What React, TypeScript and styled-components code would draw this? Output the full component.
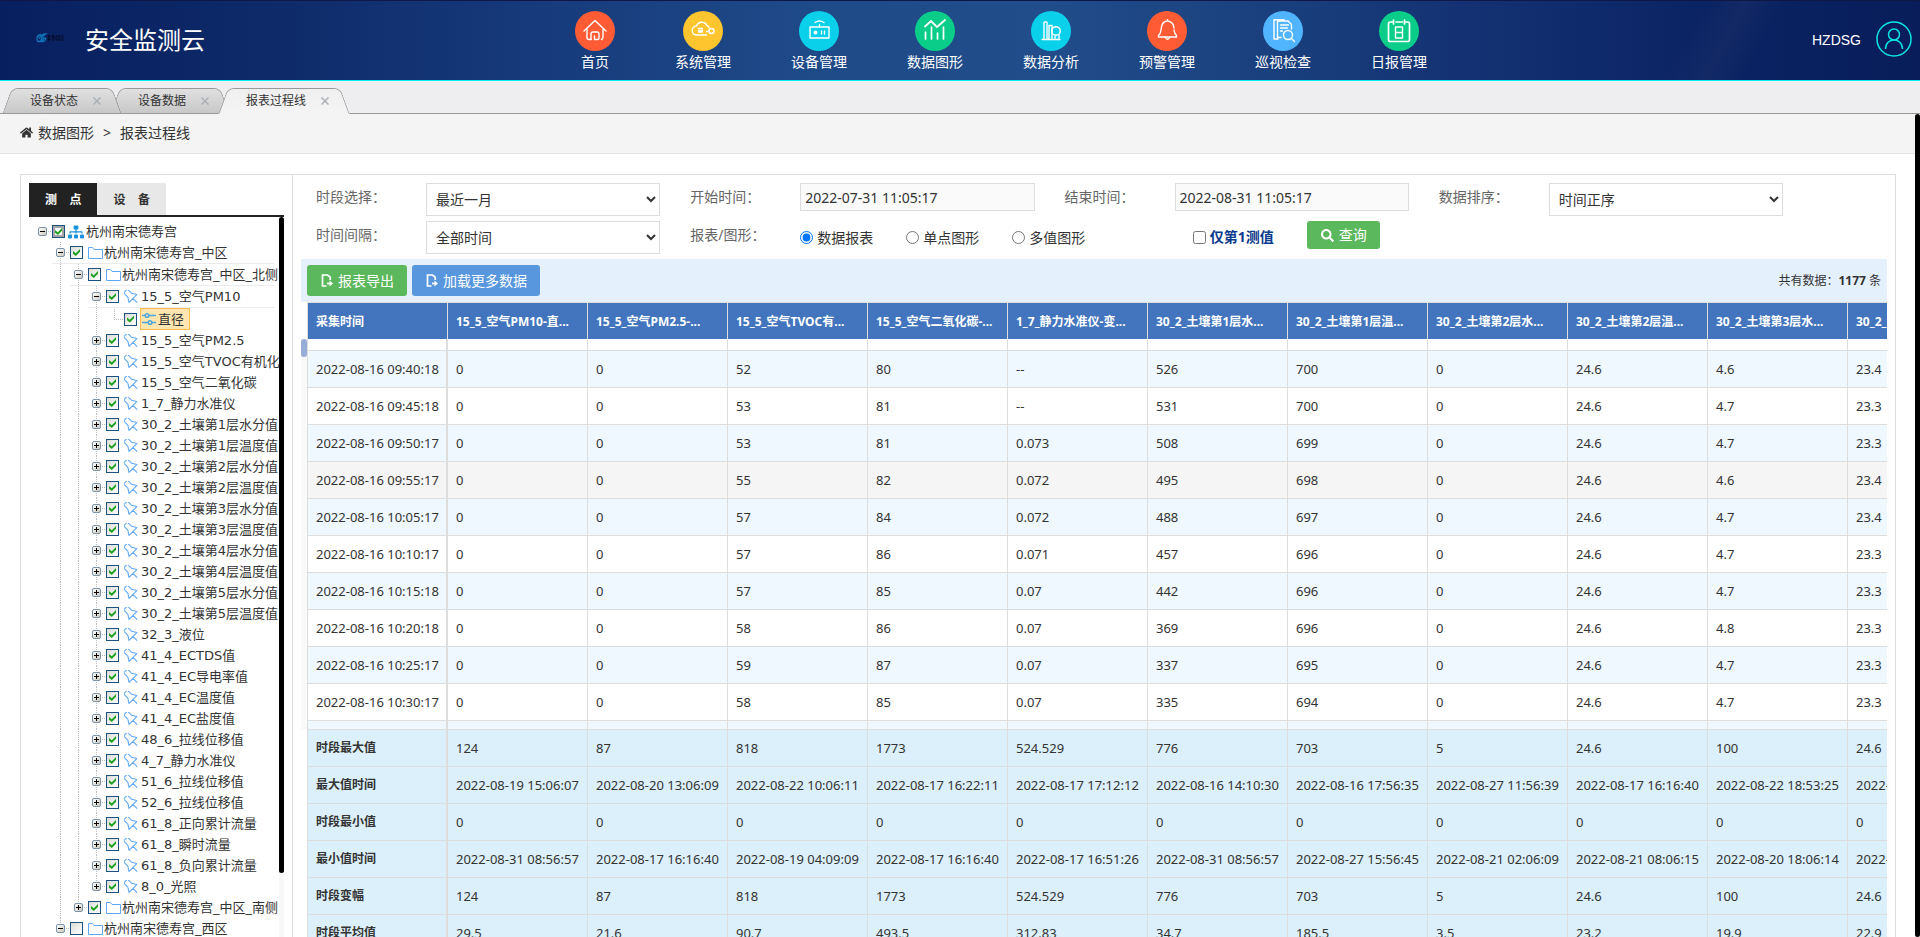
import React from "react";
import styled, { createGlobalStyle, css } from "styled-components";
import { FaSitemap, FaHome, FaSearch } from "react-icons/fa";

const uiFont = `"Noto Sans", "Noto Sans CJK SC", sans-serif`;
const lineColor = "#dddddd";

const GlobalStyle = createGlobalStyle`
  * { box-sizing: border-box; }
  body { margin: 0; overflow: hidden; background: #fff; color: #333; font: 14px/20px ${uiFont}; }
  button, input, select { font: inherit; color: inherit; }
  button { cursor: pointer; }
`;

const Page = styled.div`
  height: 100vh;
  display: flex;
  flex-direction: column;
  overflow: hidden;
`;

/* ---------- header ---------- */

const Header = styled.header`
  display: flex;
  flex: none;
  height: 81px;
  border-top: 1px solid #0e1746;
  border-bottom: 1px solid #00f0f0;
  background:
    linear-gradient(118deg, transparent 87%, rgba(60, 70, 120, 0.18) 89%, transparent 91%),
    linear-gradient(90deg, #081f5f 0%, #0e2a68 14%, #16397a 27%, #1f4a88 42%, #214d8b 54%, #1b437f 64%, #143273 76%, #0b2464 88%, #081d5a 100%);
  color: #fff;
`;

const Brand = styled.div`
  display: flex;
  align-items: center;
  flex: 0 1 545px;
  padding: 0 0 2px 36px;
  gap: 21px;
`;

const Logo = styled.div`
  display: flex;
  align-items: center;
  width: 28px;
  padding-bottom: 4px;
  svg { display: block; }
`;

const Title = styled.h1`
  margin: 0;
  font-size: 24px;
  font-weight: 400;
  line-height: 32px;
  white-space: nowrap;
`;

const Nav = styled.nav`
  display: flex;
  flex: 1;
`;

const NavLink = styled.a`
  display: flex;
  flex-direction: column;
  align-items: center;
  gap: 1px;
  padding: 10px 30px 0;
  color: #fff;
  text-decoration: none;
  white-space: nowrap;
`;

const NavIcon = styled.span<{ $color: string }>`
  display: flex;
  align-items: center;
  justify-content: center;
  width: 40px;
  height: 40px;
  border-radius: 50%;
  background: ${(p) => p.$color};
`;

const UserBox = styled.div`
  display: flex;
  align-items: center;
  gap: 15px;
  padding: 0 8px 4px 0;
  font-family: "Liberation Sans", sans-serif;
  span { padding-top: 2px; }
`;

/* ---------- page tabs ---------- */

const TabBar = styled.div`
  display: flex;
  flex: none;
  align-items: flex-end;
  height: 33px;
  padding-left: 7px;
  border-bottom: 1px solid #999;
  background: #eeeef0;
`;

const PageTab = styled.div<{ $active?: boolean; $order: number }>`
  position: relative;
  z-index: ${(p) => p.$order};
  display: flex;
  align-items: center;
  gap: 13px;
  height: 26px;
  margin: 0 -2px -1px 0;
  padding: 0 14px 0 23px;
  font-size: 12px;
  line-height: 24px;
  &::before, &::after {
    content: "";
    position: absolute;
    z-index: -1;
    top: 0;
    bottom: 0;
    border: 1px solid #999;
    background: linear-gradient(#e0e0e0, #c8c8c8);
    ${(p) => p.$active && css`background: linear-gradient(#efefef, #f4f4f4); border-bottom-color: #f4f4f4;`}
  }
  &::before {
    left: 0;
    right: 30px;
    border-right: 0;
    border-top-left-radius: 6px;
    transform: skewX(-20deg);
  }
  &::after {
    left: 30px;
    right: 0;
    border-left: 0;
    border-top-right-radius: 6px;
    transform: skewX(20deg);
  }
`;

const CloseButton = styled.button`
  display: flex;
  padding: 2px;
  border: 0;
  background: none;
  color: #aab0b6;
`;

const Crumbs = styled.div`
  display: flex;
  flex: none;
  align-items: center;
  gap: 9px;
  height: 40px;
  padding: 0 20px 2px;
  border-bottom: 1px solid #e4e4e4;
  background: #f4f4f4;
  span { display: flex; align-items: center; gap: 5px; }
`;

/* ---------- body ---------- */

const Main = styled.div`
  display: flex;
  flex: 1;
  min-height: 0;
`;

const PageColumn = styled.div`
  display: flex;
  flex: 1;
  flex-direction: column;
  min-width: 0;
`;

const Workspace = styled.main`
  display: flex;
  flex: 1;
  min-height: 0;
  margin: 20px 19px 0 20px;
  border: 1px solid ${lineColor};
  border-bottom: 0;
`;

const Rail = styled.div`
  flex: none;
  width: 5px;
  background: #f8f8f8;
`;

const RailThumb = styled.div<{ $size: string }>`
  height: ${(p) => p.$size};
  border-radius: 3px;
  background: #000;
`;

const Side = styled.aside`
  display: flex;
  flex: 0 0 272px;
  flex-direction: column;
  min-width: 0;
  min-height: 0;
  padding: 8px 8px 0;
  border-right: 1px solid ${lineColor};
`;

const SideTabs = styled.div`
  display: flex;
  flex: none;
  border-bottom: 2px solid #222;
`;

const SideTab = styled.button<{ $active?: boolean }>`
  height: 32px;
  padding: 2px 16px 0;
  border: 0;
  background: ${(p) => (p.$active ? "#222" : "#e8e8e8")};
  color: ${(p) => (p.$active ? "#fff" : "#333")};
  font-size: 12px;
  font-weight: 700;
  white-space: pre;
`;

const TreeBox = styled.div`
  display: flex;
  flex: 1;
  min-height: 0;
`;

const Tree = styled.ul`
  flex: 1;
  min-width: 0;
  margin: 0;
  padding: 4px 0 0 5px;
  overflow: hidden;
  list-style: none;
  font: 13px/21px "DejaVu Sans", "Noto Sans CJK SC", sans-serif;
  white-space: nowrap;
`;

const TreeRow = styled.li`
  display: flex;
`;

const dots = "#bdbdbd 0 1px, transparent 1px 2px";

const Guide = styled.span<{ $line?: boolean }>`
  flex: none;
  width: 18px;
  ${(p) => p.$line && css`background: repeating-linear-gradient(${dots}) 8px 0 / 1px 100% no-repeat;`}
`;

const Joint = styled.span<{ $root?: boolean; $end?: boolean }>`
  display: flex;
  flex: none;
  align-items: center;
  width: 18px;
  height: 21px;
  padding-left: 4px;
  background:
    repeating-linear-gradient(90deg, ${dots}) 8px 10px / 10px 1px no-repeat
    ${(p) => !p.$root && css`, repeating-linear-gradient(${dots}) 8px 0 / 1px ${p.$end ? "10px" : "100%"} no-repeat`};
`;

const NodeBody = styled.div<{ $tall?: boolean; $ruled?: boolean }>`
  display: flex;
  align-items: center;
  flex: 1;
  min-width: 0;
  height: ${(p) => (p.$tall || p.$ruled ? 22 : 21)}px;
  margin-right: 5px;
  border-bottom: ${(p) => (p.$ruled ? "1px solid #ebebeb" : "0")};
`;

const Expander = styled.button<{ $open?: boolean }>`
  position: relative;
  width: 9px;
  height: 9px;
  padding: 0;
  border: 1px solid #7b93a8;
  border-radius: 2px;
  background: linear-gradient(135deg, #fff, #cfc8bb);
  &::before, &::after {
    content: "";
    position: absolute;
    background: #000;
  }
  &::before { left: 1px; top: 3px; width: 5px; height: 1px; }
  &::after { left: 3px; top: 1px; width: 1px; height: ${(p) => (p.$open ? 0 : 5)}px; }
`;

const NodeLabel = styled.label`
  display: flex;
  align-items: center;
`;

const TreeCheck = styled.input<{ $partial?: boolean }>`
  appearance: none;
  flex: none;
  width: 13px;
  height: 13px;
  margin: 0 3px 0 0;
  border: 1px solid #1c5180;
  background: ${(p) => (p.$partial ? "#fff" : "linear-gradient(135deg, #dcdcd7, #fff)")};
  ${(p) => p.$partial && css`box-shadow: inset 0 0 0 2px #a5a5a5;`}
  &:checked::before {
    content: "";
    display: block;
    width: 7px;
    height: 7px;
    margin: 2px;
    background: #21a121;
    clip-path: polygon(0 28%, 40% 62%, 100% 0, 100% 38%, 40% 100%, 0 68%);
  }
`;

const NodeName = styled.span<{ $selected?: boolean; $kind: NodeKind }>`
  display: flex;
  align-items: center;
  gap: ${(p) => (p.$kind === "folder" ? 1 : 2)}px;
  padding-left: ${(p) => (p.$kind === "root" ? 0 : 2)}px;
  svg { flex: none; }
  ${(p) => p.$selected && css`
    height: 22px;
    padding: 0 5px 0 1px;
    border: 1px solid #ffb951;
    background: #ffe6b0;
  `}
`;

/* ---------- query form ---------- */

const Content = styled.section`
  flex: 1;
  min-width: 0;
  padding: 8px 8px 0;
`;

const QueryForm = styled.form`
  display: grid;
  grid-template-columns: repeat(4, minmax(0, 1fr));
  gap: 5px 30px;
  margin: 0 104px 5px 15px;
`;

const Field = styled.div`
  display: flex;
  align-items: flex-start;
  height: 33px;
`;

const FieldLabel = styled.label`
  flex: 0 0 110px;
  color: #666;
  line-height: 28px;
  white-space: nowrap;
`;

const Select = styled.select`
  flex: 1;
  min-width: 0;
  height: 33px;
  padding: 0 5px;
  border: 1px solid ${lineColor};
  border-radius: 0;
  background: #fff;
`;

const TextInput = styled.input`
  flex: 1;
  min-width: 0;
  height: 28px;
  padding: 0 4px;
  border: 1px solid ${lineColor};
  background: #fafafa;
`;

const Choices = styled.div`
  display: flex;
  gap: 33px;
  height: 33px;
  white-space: nowrap;
`;

const Choice = styled.label`
  display: flex;
  align-items: center;
  gap: 4px;
  input { width: 13px; height: 13px; margin: 0; }
`;

const QueryActions = styled.div`
  display: flex;
  align-items: flex-start;
  justify-content: flex-end;
  gap: 33px;
  padding-right: 29px;
`;

const FirstOnly = styled(Choice)`
  height: 32px;
  color: #0a3a8c;
  font-weight: 700;
  white-space: nowrap;
`;

const ActionButton = styled.button<{ $color: string; $small?: boolean }>`
  display: flex;
  align-items: center;
  gap: 5px;
  height: ${(p) => (p.$small ? 28 : 31)}px;
  padding: 0 13px 0 14px;
  border: 0;
  border-radius: 3px;
  background: ${(p) => p.$color};
  color: #fff;
  white-space: nowrap;
`;

/* ---------- data table ---------- */

const Toolbar = styled.div`
  display: flex;
  align-items: center;
  gap: 5px;
  height: 43px;
  padding: 0 6px;
  background: #e4f0fc;
`;

const Total = styled.div`
  margin-left: auto;
  font-size: 12px;
`;

const TableArea = styled.div`
  display: flex;
`;

const ScrollTrack = styled.div`
  flex: none;
  width: 6px;
  height: 390px;
  margin-top: 37px;
  background: #f9f9f9;
`;

const ScrollThumb = styled.div`
  height: 18px;
  border-radius: 3px;
  background: #96aed7;
`;

const TableClip = styled.div`
  flex: 1;
  min-width: 0;
  overflow: hidden;
  border-left: 1px solid ${lineColor};
`;

const Table = styled.table`
  width: 1680px;
  table-layout: fixed;
  border-collapse: separate;
  border-spacing: 0;
  font-size: 13px;
  line-height: 20px;
  text-align: left;
  white-space: nowrap;
`;

const HeadCell = styled.th`
  height: 37px;
  padding: 1px 8px 0;
  overflow: hidden;
  border-top: 1px solid ${lineColor};
  border-right: 1px solid ${lineColor};
  background: #4275bd;
  color: #fff;
  font-size: 12px;
`;

const cell = css`
  height: 37px;
  padding: 0 8px;
  overflow: hidden;
  border-right: 1px solid ${lineColor};
  border-bottom: 1px solid ${lineColor};
  &:first-child { border-right-width: 2px; }
`;

const Cell = styled.td`
  ${cell}
`;

const RowName = styled.th`
  ${cell}
  font-size: 12px;
`;

const DataRow = styled.tr<{ $tone: "plain" | "stripe" | "hover" }>`
  background: ${(p) => ({ plain: "#fff", stripe: "#eff8ff", hover: "#f5f5f5" })[p.$tone]};
`;

const EdgeRow = styled.tr<{ $stripe?: boolean }>`
  background: ${(p) => (p.$stripe ? "#eff8ff" : "#fff")};
  td { height: ${(p) => (p.$stripe ? 9 : 12)}px; padding: 0; }
`;

const SummaryRow = styled.tr`
  background: #dcf0fb;
`;

/* ---------- icons ---------- */

const NavSvg = ({ children }: { children: React.ReactNode }) => (
  <svg width="24" height="24" viewBox="0 0 24 24" fill="none" stroke="#fff" strokeWidth="1.4" strokeLinecap="round" strokeLinejoin="round">
    {children}
  </svg>
);

const navItems = [
  { label: "首页", color: "#ff5c35", icon: <><path d="M1 12 12 1.500 23 12M4 10v8.500q0 2 2 2h2M20 10v8q0 2-1.500 2.500" /><path d="M8 20.500V15q0-2 2-2h4q2 0 2 2v4q0 1.500-1.500 1.500h-3V17" /></> },
  { label: "系统管理", color: "#ffc52f", icon: <><path d="M15.500 16H6a4.500 4.500 0 0 1-.5-9C7 2 14 2 16 6.500q1.500.5 2 2" /><circle cx="20.500" cy="12" r="2.500" /><path d="M7.500 9.500h4M7.500 11.500h4M7.500 13h4M15.500 12.500H18" /></> },
  { label: "设备管理", color: "#0ad0ea", icon: <><path d="M3 8h19v11H3zM12.500 8V5.500M8 3.500q4.500-3 9 0" /><circle cx="8.500" cy="13.500" r="1.300" fill="#fff" /><path d="M14.500 12v3M17.500 12v3" /></> },
  { label: "数据图形", color: "#09cd88", icon: <><path d="m2 7.500 6-5.500 6 6 8-7" strokeWidth="1.800" /><path d="M2.500 20v-7M8.500 20V8M14.500 20v-6M20.500 20V8" strokeWidth="1.700" /></> },
  { label: "数据分析", color: "#0ad0ea", icon: <><path d="M3 20.500h18M5 20.500v-17q1.500-1.500 3 0v17M10 20.500v-14h3v14" /><circle cx="17" cy="12" r="4.300" /><path d="M16 20.500v-3M20 20.500v-4" /></> },
  { label: "预警管理", color: "#ff5c35", icon: <><path d="M12.500 2C7 2.500 6.500 7 6 11q-.5 4-2.500 5.500V18h18v-1.500Q19.500 15 19 11M12.500 2V.8M13 2q5.500 1 6 7" /><path d="M10 18q2.500 4.500 5 0" /></> },
  { label: "巡视检查", color: "#50b4ff", icon: <><path d="M6.500 2H17l3.500 3.500V10M6.500 2v16.500H10M3 1v19h4M3 .8h10" /><path d="M9.500 6h8M9.500 9h7M9.500 12h2" /><circle cx="17" cy="16" r="4.500" /><path d="m20.500 19.500 3 3" /></> },
  { label: "日报管理", color: "#09cd88", icon: <><path d="M5 3H3.500Q1.500 3 1.500 5v15.500q0 2 2 2h17q2 0 2-2V5q0-2-2-2H19M9 3h6.500M6.500 1v4M17.500 1v4" strokeWidth="1.700" /><path d="M8.500 8h7v11h-7zM8.500 13.500h7" /></> },
];

type NodeKind = "root" | "folder" | "pin" | "measure";

const TreeIcon = ({ kind }: { kind: NodeKind }) => {
  if (kind === "root") return <FaSitemap size={16} color="#1d91dc" />;
  if (kind === "folder")
    return (
      <svg width="15" height="14" viewBox="0 0 15 14" fill="none" stroke="#5fa8f7" strokeWidth="1">
        <path d="M.5 1.500h4l1.500 2h8.500v9H.5z" />
      </svg>
    );
  if (kind === "measure")
    return (
      <svg width="14" height="14" viewBox="0 0 14 14" fill="none" stroke="#4aa8dd" strokeWidth="1.500">
        <path d="M0 3.500h3M7 3.500h7M0 10.500h6M10 10.500h4" />
        <circle cx="5" cy="3.500" r="1.800" />
        <circle cx="8" cy="10.500" r="1.800" />
      </svg>
    );
  return (
    <svg width="15" height="14" viewBox="0 0 14 14" fill="none" stroke="#5fa8f7" strokeWidth="1.100" strokeLinejoin="round">
      <path d="M4.300-1.500h5.400v6l2.800 4.500h-11l2.800-4.500zM7 9v6" transform="rotate(-45 7 7)" />
    </svg>
  );
};

const ExportIcon = () => (
  <svg width="12" height="13" viewBox="0 0 12 13" fill="none" stroke="#fff" strokeWidth="1.700">
    <path d="M9.200 6V3.200L6.500 1H1.500v11h4" />
    <path d="M6 9.500h3" />
    <path d="M8.500 6.500 12 9.500l-3.500 3z" fill="#fff" stroke="none" />
  </svg>
);

const CloseIcon = () => (
  <svg width="8" height="8" viewBox="0 0 8 8" stroke="currentColor" strokeWidth="1.500">
    <path d="m.5.5 7 7M7.500.5l-7 7" />
  </svg>
);

/* ---------- data ---------- */

type TreeNode = {
  name: string;
  level: number;
  kind: NodeKind;
  open?: boolean;
  unchecked?: boolean;
  ruled?: boolean;
  end?: boolean;
};

const sensorNames = [
  "15_5_空气PM2.5", "15_5_空气TVOC有机化", "15_5_空气二氧化碳", "1_7_静力水准仪",
  "30_2_土壤第1层水分值", "30_2_土壤第1层温度值", "30_2_土壤第2层水分值", "30_2_土壤第2层温度值",
  "30_2_土壤第3层水分值", "30_2_土壤第3层温度值", "30_2_土壤第4层水分值", "30_2_土壤第4层温度值",
  "30_2_土壤第5层水分值", "30_2_土壤第5层温度值", "32_3_液位", "41_4_ECTDS值", "41_4_EC导电率值",
  "41_4_EC温度值", "41_4_EC盐度值", "48_6_拉线位移值", "4_7_静力水准仪", "51_6_拉线位移值",
  "52_6_拉线位移值", "61_8_正向累计流量", "61_8_瞬时流量", "61_8_负向累计流量", "8_0_光照",
];

const nodes: TreeNode[] = [
  { name: "杭州南宋德寿宫", level: 0, kind: "root", open: true },
  { name: "杭州南宋德寿宫_中区", level: 1, kind: "folder", open: true, ruled: true },
  { name: "杭州南宋德寿宫_中区_北侧", level: 2, kind: "folder", open: true, ruled: true },
  { name: "15_5_空气PM10", level: 3, kind: "pin", open: true, ruled: true },
  { name: "直径", level: 4, kind: "measure", end: true },
  ...sensorNames.map((name, i): TreeNode => ({ name, level: 3, kind: "pin", end: i === sensorNames.length - 1 })),
  { name: "杭州南宋德寿宫_中区_南侧", level: 2, kind: "folder", end: true },
  { name: "杭州南宋德寿宫_西区", level: 1, kind: "folder", open: true, unchecked: true, end: true },
];

const columns = [
  "采集时间", "15_5_空气PM10-直...", "15_5_空气PM2.5-...", "15_5_空气TVOC有...", "15_5_空气二氧化碳-...",
  "1_7_静力水准仪-变...", "30_2_土壤第1层水...", "30_2_土壤第1层温...", "30_2_土壤第2层水...",
  "30_2_土壤第2层温...", "30_2_土壤第3层水...", "30_2_",
];

const records = [
  ["2022-08-16 09:40:18", "0", "0", "52", "80", "--", "526", "700", "0", "24.6", "4.6", "23.4"],
  ["2022-08-16 09:45:18", "0", "0", "53", "81", "--", "531", "700", "0", "24.6", "4.7", "23.3"],
  ["2022-08-16 09:50:17", "0", "0", "53", "81", "0.073", "508", "699", "0", "24.6", "4.7", "23.3"],
  ["2022-08-16 09:55:17", "0", "0", "55", "82", "0.072", "495", "698", "0", "24.6", "4.6", "23.4"],
  ["2022-08-16 10:05:17", "0", "0", "57", "84", "0.072", "488", "697", "0", "24.6", "4.7", "23.4"],
  ["2022-08-16 10:10:17", "0", "0", "57", "86", "0.071", "457", "696", "0", "24.6", "4.7", "23.3"],
  ["2022-08-16 10:15:18", "0", "0", "57", "85", "0.07", "442", "696", "0", "24.6", "4.7", "23.3"],
  ["2022-08-16 10:20:18", "0", "0", "58", "86", "0.07", "369", "696", "0", "24.6", "4.8", "23.3"],
  ["2022-08-16 10:25:17", "0", "0", "59", "87", "0.07", "337", "695", "0", "24.6", "4.7", "23.3"],
  ["2022-08-16 10:30:17", "0", "0", "58", "85", "0.07", "335", "694", "0", "24.6", "4.7", "23.3"],
];
const hoveredRecord = 3;

const summary = [
  ["时段最大值", "124", "87", "818", "1773", "524.529", "776", "703", "5", "24.6", "100", "24.6"],
  ["最大值时间", "2022-08-19 15:06:07", "2022-08-20 13:06:09", "2022-08-22 10:06:11", "2022-08-17 16:22:11", "2022-08-17 17:12:12", "2022-08-16 14:10:30", "2022-08-16 17:56:35", "2022-08-27 11:56:39", "2022-08-17 16:16:40", "2022-08-22 18:53:25", "2022-"],
  ["时段最小值", "0", "0", "0", "0", "0", "0", "0", "0", "0", "0", "0"],
  ["最小值时间", "2022-08-31 08:56:57", "2022-08-17 16:16:40", "2022-08-19 04:09:09", "2022-08-17 16:16:40", "2022-08-17 16:51:26", "2022-08-31 08:56:57", "2022-08-27 15:56:45", "2022-08-21 02:06:09", "2022-08-21 08:06:15", "2022-08-20 18:06:14", "2022-"],
  ["时段变幅", "124", "87", "818", "1773", "524.529", "776", "703", "5", "24.6", "100", "24.6"],
  ["时段平均值", "29.5", "21.6", "90.7", "493.5", "312.83", "34.7", "185.5", "3.5", "23.2", "19.9", "22.9"],
];

const tabs = ["设备状态", "设备数据", "报表过程线"];

/* ---------- view ---------- */

const TreeItem = ({ node }: { node: TreeNode }) => {
  const leaf = node.kind === "measure";
  return (
    <TreeRow>
      {Array.from({ length: node.level }, (_, i) => <Guide key={i} $line={i > 0} />)}
      <NodeBody $ruled={node.ruled} $tall={leaf}>
        <Joint $root={node.level === 0} $end={node.end}>
          {!leaf && <Expander type="button" $open={node.open} aria-label={node.open ? "收起" : "展开"} />}
        </Joint>
        <NodeLabel>
          <TreeCheck type="checkbox" defaultChecked={!node.unchecked} $partial={node.level === 0} />
          <NodeName $kind={node.kind} $selected={leaf}>
            <TreeIcon kind={node.kind} />
            {node.name}
          </NodeName>
        </NodeLabel>
      </NodeBody>
    </TreeRow>
  );
};

export default function App() {
  return (
    <Page>
      <GlobalStyle />
      <Header>
        <Brand>
          <Logo>
            <svg width="28" height="10" viewBox="0 0 28 10" fill="none">
              <path d="M5 1.500Q1 2 1 6q0 3 3 2.500 3-.5 4-4M3 5.500Q6 1 9.500 1 5 4 5 8q3 1.500 4.500-1.500.5-2-2-1.500" stroke="#0e76b8" strokeWidth="1.400" />
              <path d="M11.500 3.500h3M11.500 6.500h3M13 2v6M15.500 3h3M15.500 5h3M17 2.500V8M20 3h3v4h-3zM24.500 3h3M24.500 5h3M24.500 7h3" stroke="#060b22" strokeWidth="1" />
            </svg>
          </Logo>
          <Title>安全监测云</Title>
        </Brand>
        <Nav>
          {navItems.map((item) => (
            <NavLink href="#" key={item.label}>
              <NavIcon $color={item.color}><NavSvg>{item.icon}</NavSvg></NavIcon>
              {item.label}
            </NavLink>
          ))}
        </Nav>
        <UserBox>
          <span>HZDSG</span>
          <svg width="36" height="36" viewBox="0 0 36 36" fill="none" stroke="#0be3e3" strokeWidth="1.500">
            <circle cx="18" cy="18" r="17" />
            <circle cx="18" cy="13.500" r="5.500" />
            <path d="M9.500 28c0-12 17-12 17 0" />
          </svg>
        </UserBox>
      </Header>

      <TabBar>
        {tabs.map((name, i) => (
          <PageTab key={name} $active={i === 2} $order={i === 2 ? 5 : 3 - i}>
            {name}
            <CloseButton aria-label="关闭"><CloseIcon /></CloseButton>
          </PageTab>
        ))}
      </TabBar>

      <Main>
        <PageColumn>
          <Crumbs>
            <span><FaHome size={13} />数据图形</span>
            <span>&gt;</span>
            <span>报表过程线</span>
          </Crumbs>
          <Workspace>
            <Side>
              <SideTabs>
                <SideTab $active>{"测\u00a0\u00a0\u00a0\u00a0点"}</SideTab>
                <SideTab>{"设\u00a0\u00a0\u00a0\u00a0备"}</SideTab>
              </SideTabs>
              <TreeBox>
                <Tree>
                  {nodes.map((node) => <TreeItem key={node.name} node={node} />)}
                </Tree>
                <Rail><RailThumb $size="656px" /></Rail>
              </TreeBox>
            </Side>

            <Content>
              <QueryForm onSubmit={(e) => e.preventDefault()}>
                <Field>
                  <FieldLabel htmlFor="period">时段选择：</FieldLabel>
                  <Select id="period"><option>最近一月</option></Select>
                </Field>
                <Field>
                  <FieldLabel htmlFor="start">开始时间：</FieldLabel>
                  <TextInput id="start" defaultValue="2022-07-31 11:05:17" />
                </Field>
                <Field>
                  <FieldLabel htmlFor="end">结束时间：</FieldLabel>
                  <TextInput id="end" defaultValue="2022-08-31 11:05:17" />
                </Field>
                <Field>
                  <FieldLabel htmlFor="order">数据排序：</FieldLabel>
                  <Select id="order"><option>时间正序</option></Select>
                </Field>
                <Field>
                  <FieldLabel htmlFor="interval">时间间隔：</FieldLabel>
                  <Select id="interval"><option>全部时间</option></Select>
                </Field>
                <Field>
                  <FieldLabel as="span">报表/图形：</FieldLabel>
                  <Choices>
                    <Choice><input type="radio" name="view" defaultChecked />数据报表</Choice>
                    <Choice><input type="radio" name="view" />单点图形</Choice>
                    <Choice><input type="radio" name="view" />多值图形</Choice>
                  </Choices>
                </Field>
                <QueryActions>
                  <FirstOnly><input type="checkbox" />仅第1测值</FirstOnly>
                  <ActionButton $color="#5cb85c" $small type="submit"><FaSearch size={13} />查询</ActionButton>
                </QueryActions>
              </QueryForm>

              <Toolbar>
                <ActionButton $color="#5cb85c"><ExportIcon />报表导出</ActionButton>
                <ActionButton $color="#5897de"><ExportIcon />加载更多数据</ActionButton>
                <Total>共有数据：<b>1177</b> 条</Total>
              </Toolbar>

              <TableArea>
                <ScrollTrack><ScrollThumb /></ScrollTrack>
                <TableClip>
                  <Table>
                    <thead>
                      <tr>{columns.map((name) => <HeadCell key={name}>{name}</HeadCell>)}</tr>
                    </thead>
                    <tbody>
                      <EdgeRow>{columns.map((name) => <Cell key={name} />)}</EdgeRow>
                      {records.map((values, r) => (
                        <DataRow key={values[0]} $tone={r === hoveredRecord ? "hover" : r % 2 ? "plain" : "stripe"}>
                          {values.map((value, c) => <Cell key={c}>{value}</Cell>)}
                        </DataRow>
                      ))}
                      <EdgeRow $stripe>{columns.map((name) => <Cell key={name} />)}</EdgeRow>
                    </tbody>
                    <tfoot>
                      {summary.map(([name, ...values]) => (
                        <SummaryRow key={name}>
                          <RowName scope="row">{name}</RowName>
                          {values.map((value, c) => <Cell key={c}>{value}</Cell>)}
                        </SummaryRow>
                      ))}
                    </tfoot>
                  </Table>
                </TableClip>
              </TableArea>
            </Content>
          </Workspace>
        </PageColumn>
        <Rail><RailThumb $size="100%" /></Rail>
      </Main>
    </Page>
  );
}
